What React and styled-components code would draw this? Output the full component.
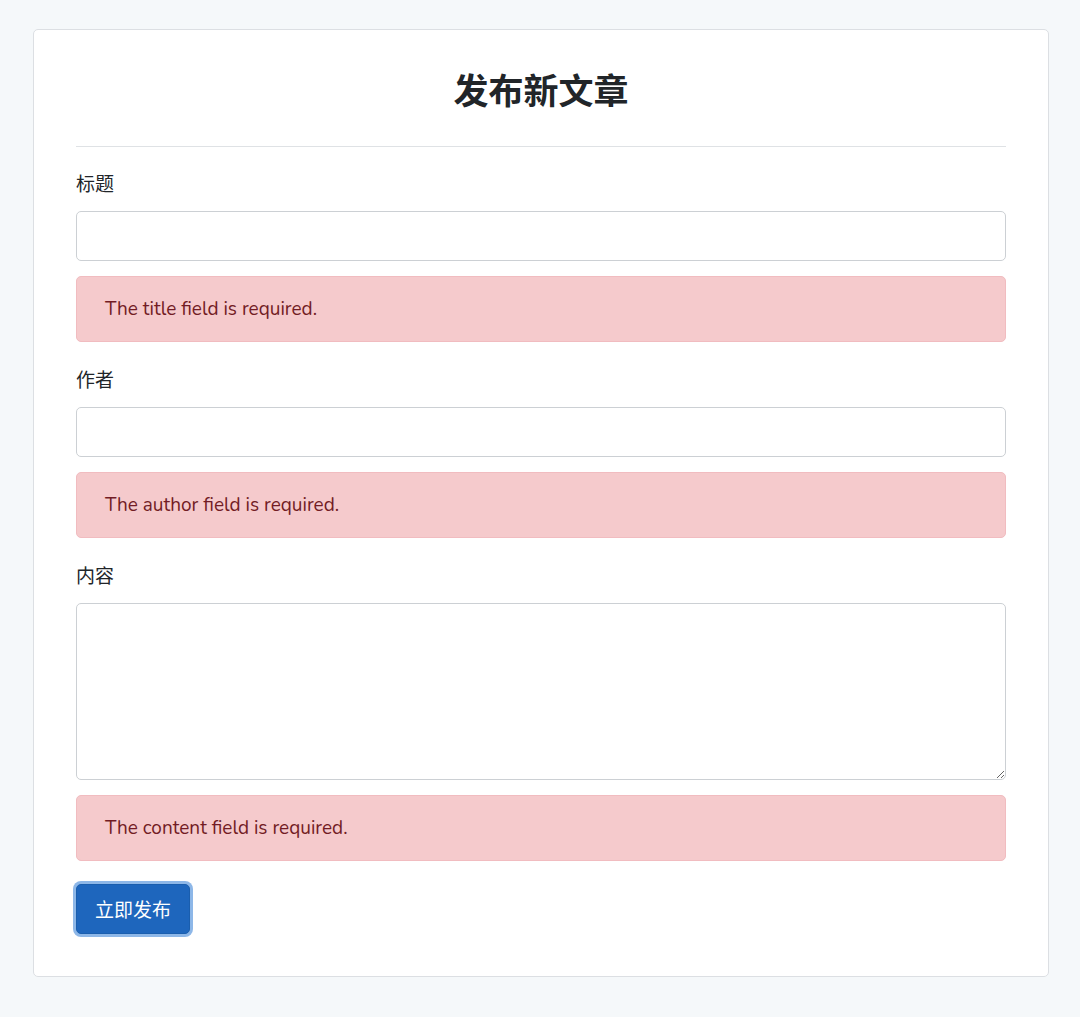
import styled, { createGlobalStyle } from 'styled-components'

const GlobalStyle = createGlobalStyle`
  body {
    margin: 0;
    background: #f5f8fa;
    font-family: "Nunito", "Lato", "Noto Sans CJK SC", sans-serif;
    color: #212529;
  }
`

const fields = [
  { label: '标题', name: 'title', error: 'The title field is required.' },
  { label: '作者', name: 'author', error: 'The author field is required.' },
  { label: '内容', name: 'content', error: 'The content field is required.', multiline: true },
]

export default function App() {
  return (
    <>
      <GlobalStyle />
      <Card>
        <Heading>发布新文章</Heading>
        <Divider />
        <form onSubmit={(e) => e.preventDefault()}>
          {fields.map((f) => (
            <Group key={f.name}>
              <Label htmlFor={f.name}>{f.label}</Label>
              {f.multiline ? (
                <TextArea id={f.name} name={f.name} />
              ) : (
                <Input id={f.name} name={f.name} type="text" />
              )}
              <Alert>{f.error}</Alert>
            </Group>
          ))}
          <SubmitButton type="submit">立即发布</SubmitButton>
        </form>
      </Card>
    </>
  )
}

const Card = styled.div`
  margin: 29px 31px 0 33px;
  padding: 42px 42px 42px 42px;
  background: #fff;
  border: 1px solid #dcdfe3;
  border-radius: 5px;
`

const Heading = styled.h1`
  margin: 0;
  padding-top: 2px;
  text-align: center;
  font-size: 35px;
  line-height: 38px;
  font-weight: 700;
  color: #212529;
`

const Divider = styled.hr`
  margin: 34px 0 25px;
  border: 0;
  border-top: 1px solid #dfe2e5;
`

const Group = styled.div`
  margin-bottom: 26px;

  &:last-of-type {
    margin-bottom: 23px;
  }
`

const Label = styled.label`
  display: block;
  font-size: 19px;
  line-height: 26px;
  margin-bottom: 13px;
`

const fieldStyle = `
  display: block;
  width: 100%;
  box-sizing: border-box;
  border: 1px solid #ccd0d4;
  border-radius: 5px;
  background: #fff;
  font-family: inherit;
  font-size: 19px;
  padding: 8px 16px;
  color: #495057;
`

const Input = styled.input`
  ${fieldStyle}
  height: 50px;
`

const TextArea = styled.textarea`
  ${fieldStyle}
  height: 177px;
  resize: vertical;
`

const Alert = styled.div`
  margin-top: 15px;
  height: 66px;
  box-sizing: border-box;
  display: flex;
  align-items: center;
  padding: 0 28px;
  background: #f5cacc;
  border: 1px solid #f1bcc0;
  border-radius: 5px;
  color: #721c24;
  font-size: 19px;
`

const SubmitButton = styled.button`
  display: block;
  margin: 0;
  height: 50px;
  padding: 0 18px;
  background: #1e66bd;
  color: #fff;
  border: 1px solid #1a5eae;
  border-radius: 5px;
  font-family: inherit;
  font-size: 19px;
  box-shadow: 0 0 0 3px #8db7e8;
  cursor: pointer;
`
